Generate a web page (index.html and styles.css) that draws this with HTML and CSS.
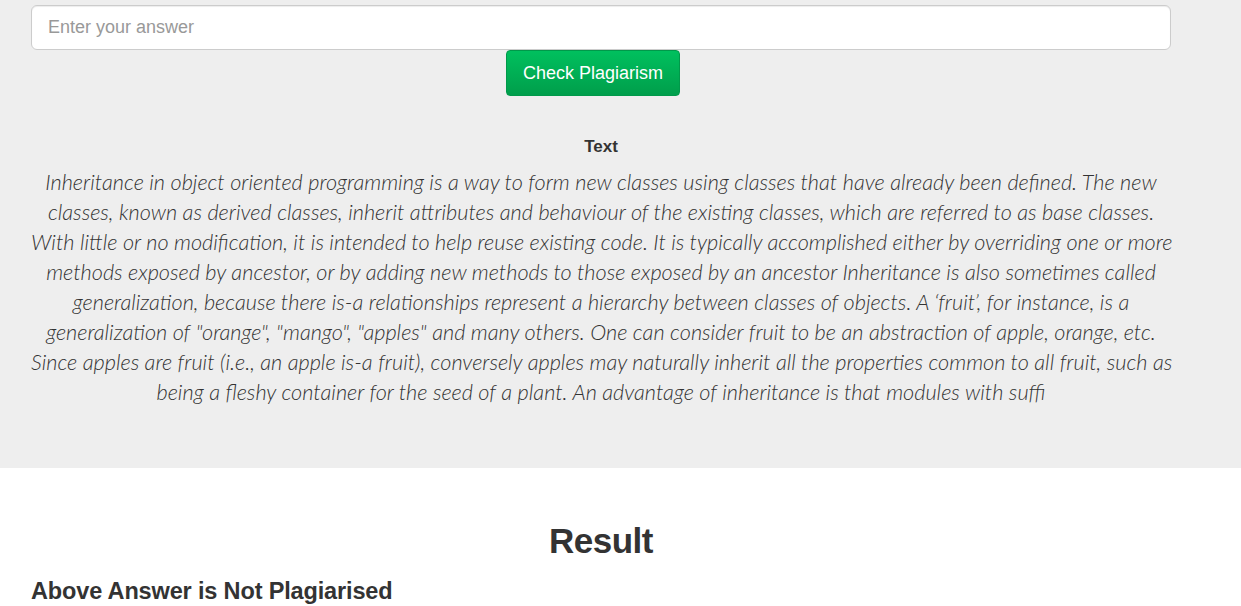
FILE: index.html
```
<!DOCTYPE html>
<html>
<head>
<meta charset="utf-8">
<link rel="stylesheet" href="styles.css">
</head>
<body>
<section class="jumbo">
  <div class="container">
    <input class="answer" type="text" placeholder="Enter your answer">
    <div class="btn-row"><button class="btn-check">Check Plagiarism</button></div>
    <div class="label">Text</div>
    <p class="lead">Inheritance in object oriented programming is a way to form new classes using classes that have already been defined. The new<br>classes, known as derived classes, inherit attributes and behaviour of the existing classes, which are referred to as base classes.<br>With little or no modification, it is intended to help reuse existing code. It is typically accomplished either by overriding one or more<br>methods exposed by ancestor, or by adding new methods to those exposed by an ancestor Inheritance is also sometimes called<br>generalization, because there is-a relationships represent a hierarchy between classes of objects. A ‘fruit’, for instance, is a<br>generalization of "orange", "mango", "apples" and many others. One can consider fruit to be an abstraction of apple, orange, etc.<br>Since apples are fruit (i.e., an apple is-a fruit), conversely apples may naturally inherit all the properties common to all fruit, such as<br>being a fleshy container for the seed of a plant. An advantage of inheritance is that modules with suffi</p>
  </div>
</section>
<section class="result">
  <div class="container">
    <h1 class="result-title">Result</h1>
    <h3 class="verdict">Above Answer is Not Plagiarised</h3>
  </div>
</section>
</body>
</html>
```
FILE: styles.css
```
html, body {
  margin: 0;
  padding: 0;
}
body {
  font-family: "Liberation Sans", Arial, sans-serif;
  color: #333;
  background: #fff;
  overflow: hidden;
}
.container {
  width: 1140px;
  margin-left: 31px;
}
.jumbo {
  background: #eee;
  padding-top: 5px;
  height: 463px;
}
.answer {
  display: block;
  box-sizing: border-box;
  width: 1140px;
  height: 45px;
  margin: 0;
  padding: 10px 16px;
  font-family: "Liberation Sans", Arial, sans-serif;
  font-size: 18px;
  color: #555;
  background: #fff;
  border: 1px solid #ccc;
  border-radius: 6px;
  box-shadow: inset 0 1px 1px rgba(0,0,0,0.075);
  outline: none;
}
.answer::placeholder {
  color: #999;
}
.btn-row {
  padding-left: 475px;
}
.btn-check {
  display: block;
  box-sizing: border-box;
  width: 174px;
  height: 46px;
  margin: 0;
  padding: 0;
  font-family: "Liberation Sans", Arial, sans-serif;
  font-size: 18px;
  color: #fff;
  background: linear-gradient(#00c05e, #009e4b);
  border: 1px solid #00994a;
  border-radius: 4px;
}
.label {
  margin-top: 41px;
  text-align: center;
  font-weight: bold;
  font-size: 17px;
  line-height: 20px;
  color: #333;
}
.lead {
  margin: 10px 0 0;
  text-align: center;
  white-space: nowrap;
  font-family: Lato, "Liberation Sans", sans-serif;
  font-size: 21.7px;
  line-height: 30px;
  font-style: italic;
  font-weight: 300;
  color: #333;
}
.result-title {
  margin: 53px 0 0;
  text-align: center;
  font-size: 35px;
  line-height: 40px;
  font-weight: bold;
  letter-spacing: -0.5px;
  color: #333;
}
.verdict {
  margin: 17px 0 0;
  font-size: 23.5px;
  line-height: 26px;
  font-weight: bold;
  letter-spacing: -0.15px;
  color: #333;
}
```
